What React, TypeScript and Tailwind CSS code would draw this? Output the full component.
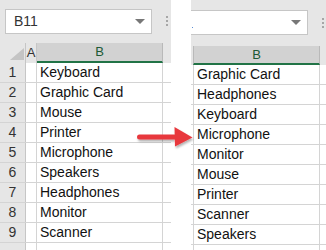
import React from "react";

const leftItems = ["Keyboard", "Graphic Card", "Mouse", "Printer", "Microphone", "Speakers", "Headphones", "Monitor", "Scanner"];
const rightItems = ["Graphic Card", "Headphones", "Keyboard", "Microphone", "Monitor", "Mouse", "Printer", "Scanner", "Speakers"];

const font = { fontFamily: '"Liberation Sans", Arial, sans-serif' };

function Dots() {
  return (
    <div className="flex flex-col gap-[2px]">
      <div className="w-[2px] h-[2px] bg-[#a6a6a6]" />
      <div className="w-[2px] h-[2px] bg-[#a6a6a6]" />
      <div className="w-[2px] h-[2px] bg-[#a6a6a6]" />
    </div>
  );
}

function Caret() {
  return (
    <div className="w-0 h-0 border-l-[5px] border-r-[5px] border-t-[5px] border-l-transparent border-r-transparent border-t-[#777]" />
  );
}

function LeftPanel() {
  return (
    <div className="w-[171px] flex flex-col shrink-0">
      <div className="h-[43px] shrink-0 bg-[#e6e6e6] flex items-start">
        <div className="ml-[5px] mt-[9px] w-[147px] h-[25px] bg-white border border-[#c6c6c6] flex items-center justify-between pl-[8px] pr-[6px]">
          <span className="text-[14px] text-[#333]">B11</span>
          <Caret />
        </div>
        <div className="ml-[14px] mt-[16px]">
          <Dots />
        </div>
      </div>
      <div className="h-[20px] shrink-0 flex bg-[#e6e6e6]">
        <div className="w-[26px] h-full border-r border-[#c6c6c6] relative">
          <svg className="absolute left-0 top-0" width="26" height="20">
            <polygon points="10,17 24,5 24,17" fill="#c4c4c4" />
          </svg>
        </div>
        <div className="w-[11px] h-full border-r border-[#c6c6c6] flex items-center justify-center text-[13px] text-[#333]">A</div>
        <div className="w-[126px] h-full bg-[#d2d2d2] border-r border-[#b9b9b9] border-b-2 border-b-[#217346] flex items-center justify-center text-[13px] text-[#1d5a36]">B</div>
        <div className="flex-1" />
      </div>
      {leftItems.concat([""]).map((item, i) => (
        <div key={i} className="h-[20px] flex shrink-0 border-b border-[#d4d4d4]">
          <div className="w-[26px] h-full bg-[#e6e6e6] border-r border-[#c6c6c6] flex items-center justify-center text-[14px] text-[#333]">
            {i < 9 ? i + 1 : ""}
          </div>
          <div className="w-[11px] h-full border-r border-[#d4d4d4]" />
          <div className="w-[126px] h-full border-r border-[#d4d4d4] flex items-center pl-[3px] text-[14px] text-[#111]">{item}</div>
          <div className="flex-1" />
        </div>
      ))}
    </div>
  );
}

function RightPanel() {
  return (
    <div className="flex-1 flex flex-col min-w-0">
      <div className="h-[46px] shrink-0 bg-[#e6e6e6] flex items-start">
        <div className="mt-[10px] w-[117px] h-[25px] bg-white border border-l-0 border-[#c6c6c6] flex items-center justify-end pr-[6px] relative">
          <div className="absolute left-[1px] top-[16px] w-[1px] h-[1px] bg-[#5b8fd6]" />
          <Caret />
        </div>
        <div className="ml-[14px] mt-[18px]">
          <Dots />
        </div>
      </div>
      <div className="h-[19px] shrink-0 flex bg-[#e6e6e6]">
        <div className="w-[2px] h-full" />
        <div className="w-[127px] h-full bg-[#d2d2d2] border-l border-r border-[#b9b9b9] border-b-2 border-b-[#217346] flex items-center justify-center text-[13px] text-[#1d5a36]">B</div>
        <div className="flex-1" />
      </div>
      {rightItems.concat([""]).map((item, i) => (
        <div key={i} className="h-[20px] flex shrink-0 border-b border-[#d4d4d4]">
          <div className="w-[2px] h-full bg-white" />
          <div className="w-[127px] h-full border-l border-r border-[#d4d4d4] flex items-center pl-[3px] text-[14px] text-[#111]">{item}</div>
          <div className="flex-1" />
        </div>
      ))}
    </div>
  );
}

export default function App() {
  return (
    <div className="w-[326px] h-[250px] overflow-hidden bg-white relative flex items-start" style={font}>
      <LeftPanel />
      <div className="w-[20px] shrink-0 bg-white" />
      <RightPanel />
      <svg className="absolute left-[130px] top-[120px]" width="70" height="35" viewBox="130 120 70 35">
        <defs>
          <filter id="sh" x="-20%" y="-40%" width="150%" height="200%">
            <feDropShadow dx="1" dy="2" stdDeviation="1.2" floodColor="#000" floodOpacity="0.3" />
          </filter>
        </defs>
        <g filter="url(#sh)">
          <rect x="137" y="134.5" width="40" height="5" rx="2.5" fill="#e8393d" />
          <polygon points="174.5,127 192.5,137.5 175,146.5" fill="#e8393d" />
        </g>
      </svg>
    </div>
  );
}
